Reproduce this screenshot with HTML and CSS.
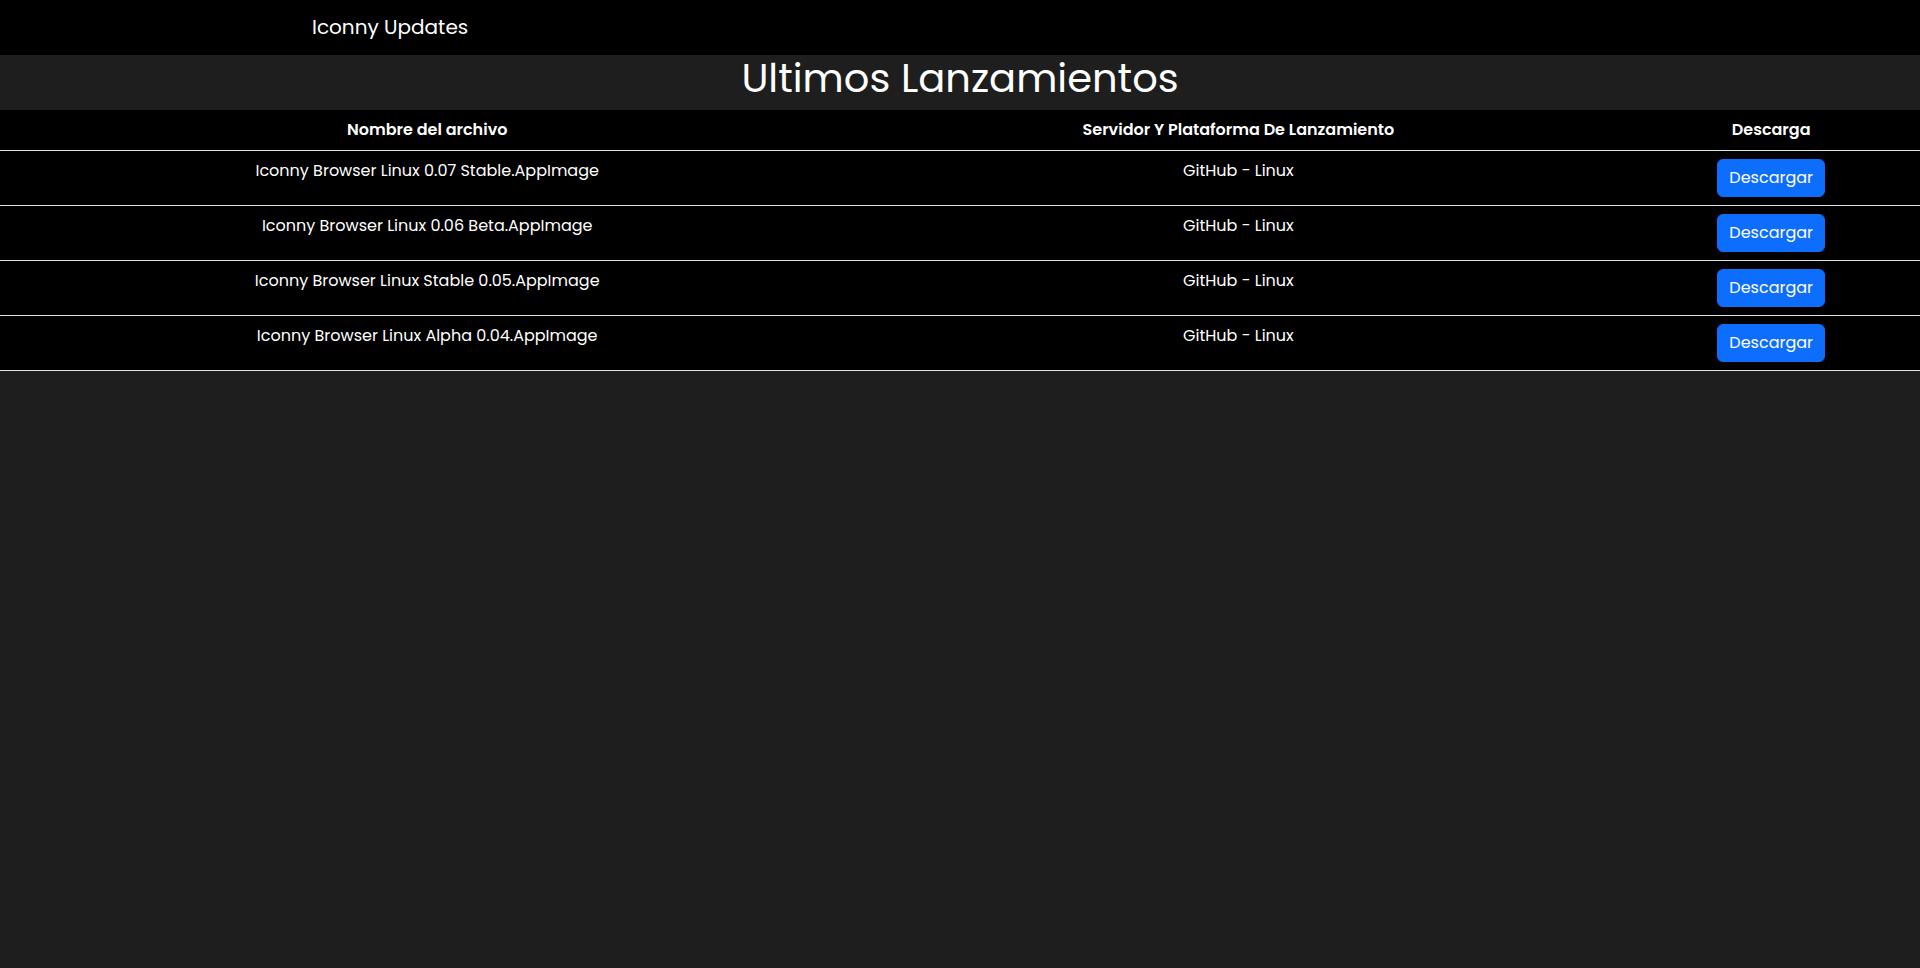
FILE: index.html
```html
<!DOCTYPE html>
<html lang="es">
<head>
<meta charset="utf-8">
<title>Iconny Updates</title>
<link rel="stylesheet" href="styles.css">
</head>
<body>
<nav class="navbar">
  <div class="container">
    <a class="brand" href="#">Iconny Updates</a>
  </div>
</nav>
<div class="title-band">
  <h1 class="title">Ultimos Lanzamientos</h1>
</div>
<table class="releases">
  <colgroup>
    <col class="c-name">
    <col class="c-server">
    <col class="c-dl">
  </colgroup>
  <thead>
    <tr>
      <th>Nombre del archivo</th>
      <th>Servidor Y Plataforma De Lanzamiento</th>
      <th>Descarga</th>
    </tr>
  </thead>
  <tbody>
    <tr>
      <td>Iconny Browser Linux 0.07 Stable.AppImage</td>
      <td>GitHub - Linux</td>
      <td><a class="btn" href="#">Descargar</a></td>
    </tr>
    <tr>
      <td>Iconny Browser Linux 0.06 Beta.AppImage</td>
      <td>GitHub - Linux</td>
      <td><a class="btn" href="#">Descargar</a></td>
    </tr>
    <tr>
      <td>Iconny Browser Linux Stable 0.05.AppImage</td>
      <td>GitHub - Linux</td>
      <td><a class="btn" href="#">Descargar</a></td>
    </tr>
    <tr>
      <td>Iconny Browser Linux Alpha 0.04.AppImage</td>
      <td>GitHub - Linux</td>
      <td><a class="btn" href="#">Descargar</a></td>
    </tr>
  </tbody>
</table>
</body>
</html>
```
FILE: styles.css
```css
* { box-sizing: border-box; }

body {
  margin: 0;
  background: #1e1e1e;
  color: #fff;
  font-family: "Poppins", "Inter", "Open Sans", sans-serif;
  font-size: 16px;
  line-height: 24px;
}

.navbar {
  background: #000;
  height: 55px;
  display: flex;
  align-items: center;
}

.container {
  width: 1320px;
  margin: 0 auto;
  padding: 0 12px 2px;
}

.brand {
  color: #fff;
  text-decoration: none;
  font-size: 20px;
  line-height: 30px;
  font-weight: 400;
}

.title-band {
  height: 55px;
  padding-bottom: 8px;
  text-align: center;
}

.title {
  margin: 0;
  font-size: 40px;
  line-height: 47px;
  font-weight: 400;
}

.releases {
  width: 100%;
  border-collapse: collapse;
  background: #000;
  text-align: center;
}

.c-name { width: 44.5%; }
.c-server { width: 40%; }
.c-dl { width: 15.5%; }

.releases th,
.releases td {
  padding: 8px;
  border-bottom: 1px solid #dee2e6;
  vertical-align: top;
}

.releases th {
  font-weight: 600;
}

.btn {
  display: inline-block;
  background: #0d6efd;
  border: 1px solid #0d6efd;
  color: #fff;
  text-decoration: none;
  padding: 6px 11px;
  border-radius: 6px;
  font-size: 16px;
  line-height: 24px;
}
```
